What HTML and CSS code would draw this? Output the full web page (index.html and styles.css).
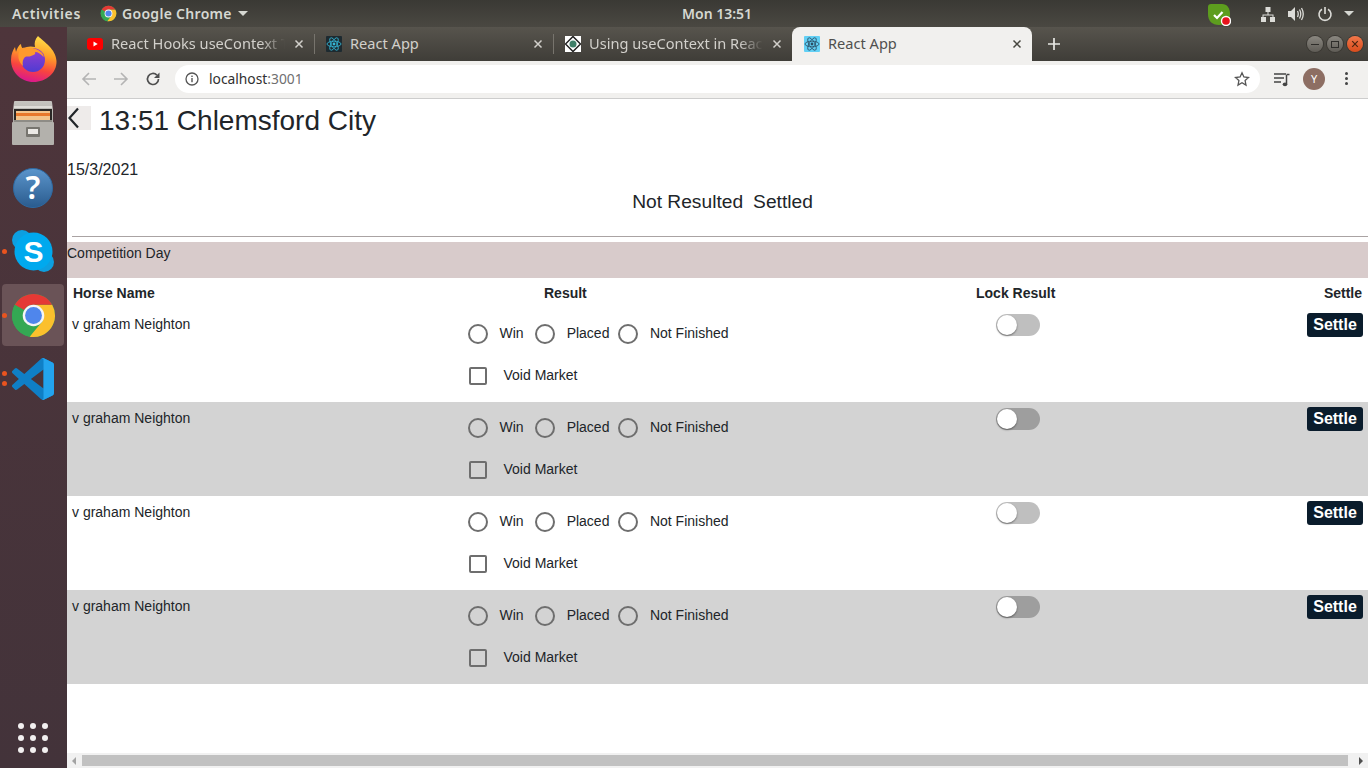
FILE: index.html
```html
<!DOCTYPE html>
<html lang="en">
<head>
<meta charset="utf-8">
<title>React App</title>
<link rel="stylesheet" href="styles.css">
</head>
<body>
<svg class="defs" width="0" height="0" aria-hidden="true">
  <defs>
    <symbol id="chrome" viewBox="0 0 48 48">
      <circle cx="24" cy="24" r="22" fill="#34a853"/>
      <path d="M43.05 13H24l9.5 16.5L20 45.6A22 22 0 0 0 43.05 13z" fill="#fbc02d"/>
      <path d="M4.95 13a22 22 0 0 1 38.1 0H24a11 11 0 0 0-9.5 5.5z" fill="#e53935"/>
      <path d="M4.95 13a22 22 0 0 0 15 32.6L29.5 29.5H14.5z" fill="#34a853"/>
      <circle cx="24" cy="24" r="11" fill="#f5f5f5"/>
      <circle cx="24" cy="24" r="8.6" fill="#4f86ec"/>
    </symbol>
    <symbol id="react" viewBox="0 0 16 16">
      <rect width="16" height="16" rx="1" fill="currentColor"/>
      <g fill="none" stroke="#35b8d8" stroke-width=".8">
        <ellipse cx="8" cy="8" rx="7" ry="2.8"/>
        <ellipse cx="8" cy="8" rx="7" ry="2.8" transform="rotate(60 8 8)"/>
        <ellipse cx="8" cy="8" rx="7" ry="2.8" transform="rotate(120 8 8)"/>
      </g>
      <circle cx="8" cy="8" r="1.4" fill="#35b8d8"/>
    </symbol>
    <symbol id="close" viewBox="0 0 10 10">
      <path d="M1.5 1.5l7 7M8.5 1.5l-7 7" fill="none" stroke="currentColor" stroke-width="1.5"/>
    </symbol>
  </defs>
</svg>

<header class="topbar">
  <div class="topbar-left">
    <span class="activities">Activities</span>
    <span class="app-menu">
      <svg class="app-menu-icon" width="17" height="17"><use href="#chrome"/></svg>
      Google Chrome
      <i class="caret"></i>
    </span>
  </div>
  <span class="clock">Mon 13:51</span>
  <div class="tray">
    <svg class="tray-shield" width="23" height="24" viewBox="0 0 23 24">
      <path d="M3 2H14C19 2 22 6 22 12C22 19 18 23 11 23C4 23 0 19 0 12V5C0 3 1 2 3 2Z" fill="#5d9d1e"/>
      <path d="M6 13l3 3 5.500-6" fill="none" stroke="#fff" stroke-width="2.200"/>
      <circle cx="18" cy="19" r="5.200" fill="#fff"/>
      <circle cx="18" cy="19" r="3.800" fill="#e8131c"/>
    </svg>
    <svg class="tray-net" width="16" height="16" viewBox="0 0 16 16" fill="#dcdcd8">
      <rect x="5.500" y="1" width="5" height="5"/>
      <rect x="1" y="11" width="5" height="5"/>
      <rect x="10" y="11" width="5" height="5"/>
      <path d="M7.500 6h1v2.500h5V11h-1V9.500h-9V11h-1V8.500h5z"/>
    </svg>
    <svg class="tray-vol" width="18" height="16" viewBox="0 0 18 16">
      <path d="M1 5h3l4-4v14l-4-4H1z" fill="#dcdcd8"/>
      <path d="M10.500 5q1.500 3 0 6M12.500 3.500q2.500 4.500 0 9M14.500 2q3.500 6 0 12" fill="none" stroke="#dcdcd8" stroke-width="1.300"/>
    </svg>
    <svg class="tray-power" width="16" height="16" viewBox="0 0 16 16">
      <path d="M5 3.200a6 6 0 1 0 6 0M8 1v7" fill="none" stroke="#dcdcd8" stroke-width="1.600"/>
    </svg>
    <i class="caret"></i>
  </div>
</header>

<div class="desk">
  <nav class="dock">
    <div class="dock-item">
      <svg width="48" height="48" viewBox="-1 0 48 48">
        <defs>
          <linearGradient id="ff" x1="0.650" y1="0" x2="0.400" y2="1">
            <stop offset="0" stop-color="#ffe04a"/><stop offset=".38" stop-color="#ffa028"/><stop offset=".7" stop-color="#f8443f"/><stop offset="1" stop-color="#d9178f"/>
          </linearGradient>
          <linearGradient id="ffball" x1="0.500" y1="0" x2="0.500" y2="1">
            <stop offset="0" stop-color="#9a3fd0"/><stop offset="1" stop-color="#4f3bd2"/>
          </linearGradient>
        </defs>
        <path d="M28 1C34 7 46 14 46.500 26C47 38 36 47 23.500 47C11 47 1 37 1 25C1 19 3 15 5 12L6 17C7 13 9 10 11 9C11 11 12 13 13 14C17 11 21 11 25 12C24 8 25 4 28 1Z" fill="url(#ff)"/>
        <circle cx="23" cy="25" r="12" fill="url(#ffball)"/>
        <path d="M10 14C14 12 22 12 28 15C32 17 34 20 33.500 22C31 19 28 17 25 17C26 19 24 20 21 21C19 22 17 21 15 22C13 24 12 27 13 31C8 27 7 19 10 14Z" fill="#ff9a2c"/>
      </svg>
    </div>
    <div class="dock-item">
      <svg width="44" height="44" viewBox="0 0 44 44">
        <defs>
          <linearGradient id="cab" x1="0" y1="0" x2="0" y2="1">
            <stop offset="0" stop-color="#c6c4c0"/><stop offset="1" stop-color="#98968f"/>
          </linearGradient>
        </defs>
        <path d="M3 1q0-1 1-1h36q1 0 1 1l1 8v34q0 1-1 1H3q-1 0-1-1V9z" fill="url(#cab)"/>
        <rect x="3" y="5" width="38" height="2" fill="#dedcd8"/>
        <rect x="3" y="8" width="38" height="13" fill="#2a2725"/>
        <rect x="5" y="10" width="34" height="9" fill="#f3c48c"/>
        <rect x="5" y="12" width="34" height="3" fill="#e8782c"/>
        <rect x="3" y="19" width="38" height="2" fill="#8e8c86"/>
        <rect x="1" y="21" width="42" height="23" rx="1" fill="#b3b1ac"/>
        <rect x="15" y="26" width="14" height="10" rx="1" fill="#77756f"/>
        <rect x="17" y="28" width="10" height="5" fill="#ebe9e5"/>
      </svg>
    </div>
    <div class="dock-item">
      <svg width="42" height="42" viewBox="0 0 42 42">
        <defs>
          <linearGradient id="hlp" x1="0" y1="0" x2="0" y2="1">
            <stop offset="0" stop-color="#5b95cc"/><stop offset="1" stop-color="#2a5b8e"/>
          </linearGradient>
        </defs>
        <circle cx="21" cy="22" r="19.500" fill="url(#hlp)" stroke="#2d6aa3"/>
        <text x="21" y="33" class="help-mark" text-anchor="middle">?</text>
      </svg>
    </div>
    <div class="dock-item has-dot">
      <svg width="44" height="44" viewBox="0 0 44 44">
        <circle cx="11" cy="11" r="10" fill="#0d9fe0"/>
        <circle cx="33" cy="33" r="10" fill="#0d9fe0"/>
        <circle cx="22.500" cy="22.500" r="19" fill="#00a9ee"/>
        <text x="22.500" y="33" class="skype-mark" text-anchor="middle">S</text>
      </svg>
    </div>
    <div class="dock-item is-active has-dot">
      <svg width="47" height="47"><use href="#chrome"/></svg>
    </div>
    <div class="dock-item has-two-dots">
      <svg width="42" height="42" viewBox="0 0 24 24">
        <path d="M23.150 2.587L18.210.21a1.494 1.494 0 0 0-1.705.29l-9.460 8.630-4.120-3.128a.999.999 0 0 0-1.276.057L.327 7.261A1 1 0 0 0 .326 8.740L3.899 12 .326 15.260a1 1 0 0 0 .001 1.479L1.650 17.940a.999.999 0 0 0 1.276.057l4.120-3.128 9.460 8.630a1.492 1.492 0 0 0 1.704.29l4.942-2.377A1.500 1.500 0 0 0 24 20.060V3.939a1.500 1.500 0 0 0-.85-1.352zm-5.146 14.861L10.826 12l7.178-5.448v10.896z" fill="#0f7fc6"/>
        <path d="M17 .1a1.500 1.500 0 0 1 1.210.11l4.940 2.377A1.500 1.500 0 0 1 24 3.939V20.060a1.500 1.500 0 0 1-.85 1.352l-4.940 2.377a1.500 1.500 0 0 1-1.210.11c.6.1 1-.4 1-1V1c0-.5-.4-1-1-.9z" fill="#23a4ee"/>
      </svg>
    </div>
    <div class="app-grid" aria-label="Show applications">
      <i></i><i></i><i></i><i></i><i></i><i></i><i></i><i></i><i></i>
    </div>
  </nav>

  <div class="browser">
    <div class="tabstrip">
      <div class="tab">
        <svg class="tab-icon" width="16" height="16" viewBox="0 0 16 16">
          <rect y="2" width="16" height="12" rx="3" fill="#f00"/>
          <path d="M6.500 5.500v5l4.200-2.500z" fill="#fff"/>
        </svg>
        <span class="tab-title is-faded">React Hooks useContext T</span>
        <svg class="tab-close" width="10" height="10"><use href="#close"/></svg>
      </div>
      <div class="tab">
        <svg class="tab-icon react-dark" width="16" height="16"><use href="#react"/></svg>
        <span class="tab-title">React App</span>
        <svg class="tab-close" width="10" height="10"><use href="#close"/></svg>
      </div>
      <div class="tab no-sep">
        <svg class="tab-icon" width="16" height="16" viewBox="0 0 16 16">
          <rect width="16" height="16" fill="#fff"/>
          <path d="M8 .5L15.500 8 8 15.500.5 8z" fill="none" stroke="#222" stroke-width="1.500"/>
          <circle cx="8" cy="8" r="3.500" fill="#3f7f68"/>
        </svg>
        <span class="tab-title is-faded">Using useContext in Reac</span>
        <svg class="tab-close" width="10" height="10"><use href="#close"/></svg>
      </div>
      <div class="tab is-active">
        <svg class="tab-icon react-light" width="16" height="16" viewBox="0 0 16 16">
          <rect width="16" height="16" rx="1" fill="#62d0f5"/>
          <g fill="none" stroke="#2b4c63" stroke-width=".8">
            <ellipse cx="8" cy="8" rx="7" ry="2.800"/>
            <ellipse cx="8" cy="8" rx="7" ry="2.800" transform="rotate(60 8 8)"/>
            <ellipse cx="8" cy="8" rx="7" ry="2.800" transform="rotate(120 8 8)"/>
          </g>
          <circle cx="8" cy="8" r="1.400" fill="#2b4c63"/>
        </svg>
        <span class="tab-title">React App</span>
        <svg class="tab-close" width="10" height="10"><use href="#close"/></svg>
      </div>
      <svg class="new-tab" width="12" height="12" viewBox="0 0 12 12">
        <path d="M6 0v12M0 6h12" stroke="#e8e8e4" stroke-width="1.700"/>
      </svg>
      <div class="win-controls">
        <span class="win-btn"><i class="win-min"></i></span>
        <span class="win-btn"><i class="win-max"></i></span>
        <span class="win-btn win-close">
          <svg width="8" height="8"><use href="#close"/></svg>
        </span>
      </div>
    </div>

    <div class="toolbar">
      <svg class="tool tool-first" width="16" height="16" viewBox="0 0 16 16">
        <path d="M15 8H2M8 2L2 8l6 6" fill="none" stroke="#b4b4b4" stroke-width="1.600"/>
      </svg>
      <svg class="tool" width="16" height="16" viewBox="0 0 16 16">
        <path d="M1 8h13M8 2l6 6-6 6" fill="none" stroke="#b4b4b4" stroke-width="1.600"/>
      </svg>
      <svg class="tool" width="16" height="16" viewBox="0 0 16 16">
        <path d="M13.500 8a5.500 5.500 0 1 1-1.600-3.900" fill="none" stroke="#4f4f4f" stroke-width="1.700"/>
        <path d="M14.500 1.500v5.500H9z" fill="#4f4f4f"/>
      </svg>
      <div class="omnibox">
        <svg class="info" width="14" height="14" viewBox="0 0 14 14">
          <circle cx="7" cy="7" r="6" fill="none" stroke="#555" stroke-width="1.300"/>
          <rect x="6.300" y="6" width="1.400" height="4.200" fill="#555"/>
          <rect x="6.300" y="3.600" width="1.400" height="1.400" fill="#555"/>
        </svg>
        <span class="url">localhost<span class="url-port">:3001</span></span>
        <svg class="star" width="16" height="16" viewBox="0 0 16 16">
          <path d="M8 1.800l1.900 4.200 4.600.5-3.400 3.100.9 4.500L8 11.800l-4 2.300.9-4.500L1.500 6.500 6.100 6z" fill="none" stroke="#555" stroke-width="1.300"/>
        </svg>
      </div>
      <svg class="queue" width="16" height="16" viewBox="0 0 16 16">
        <path d="M0 3h12M0 7h10M0 11h7" stroke="#444" stroke-width="1.500"/>
        <path d="M12.500 4v9" stroke="#444" stroke-width="1.500"/>
        <path d="M12.500 3.500h3" stroke="#444" stroke-width="1.500"/>
        <ellipse cx="11" cy="13.300" rx="2.300" ry="1.900" fill="#444"/>
      </svg>
      <span class="avatar">Y</span>
      <span class="kebab"><i></i><i></i><i></i></span>
    </div>

    <main class="page">
      <div class="page-head">
        <button class="back" type="button" aria-label="Back">
          <svg width="11" height="22" viewBox="0 0 11 22">
            <path d="M10 1.500L1.500 11l8.500 9.500" fill="none" stroke="#212529" stroke-width="2.200"/>
          </svg>
        </button>
        <h1 class="title">13:51 Chlemsford City</h1>
      </div>
      <p class="date">15/3/2021</p>
      <div class="filter">
        <span>Not Resulted</span>
        <span>Settled</span>
      </div>
      <hr class="rule">
      <div class="band">Competition Day</div>

      <div class="grid-row head-row">
        <span class="h-name">Horse Name</span>
        <span class="h-result">Result</span>
        <span>Lock Result</span>
        <span class="h-settle">Settle</span>
      </div>

      <div class="grid-row data-row">
        <div class="c-name">v graham Neighton</div>
        <div class="c-result">
          <div class="radios">
            <span class="opt"><i class="radio"></i><span class="lbl">Win</span></span>
            <span class="opt"><i class="radio"></i><span class="lbl">Placed</span></span>
            <span class="opt"><i class="radio"></i><span class="lbl">Not Finished</span></span>
          </div>
          <div class="void"><i class="check"></i><span class="lbl">Void Market</span></div>
        </div>
        <div class="c-lock"><span class="toggle"><i></i></span></div>
        <div class="c-settle"><button class="settle" type="button">Settle</button></div>
      </div>

      <div class="grid-row data-row is-alt">
        <div class="c-name">v graham Neighton</div>
        <div class="c-result">
          <div class="radios">
            <span class="opt"><i class="radio"></i><span class="lbl">Win</span></span>
            <span class="opt"><i class="radio"></i><span class="lbl">Placed</span></span>
            <span class="opt"><i class="radio"></i><span class="lbl">Not Finished</span></span>
          </div>
          <div class="void"><i class="check"></i><span class="lbl">Void Market</span></div>
        </div>
        <div class="c-lock"><span class="toggle"><i></i></span></div>
        <div class="c-settle"><button class="settle" type="button">Settle</button></div>
      </div>

      <div class="grid-row data-row">
        <div class="c-name">v graham Neighton</div>
        <div class="c-result">
          <div class="radios">
            <span class="opt"><i class="radio"></i><span class="lbl">Win</span></span>
            <span class="opt"><i class="radio"></i><span class="lbl">Placed</span></span>
            <span class="opt"><i class="radio"></i><span class="lbl">Not Finished</span></span>
          </div>
          <div class="void"><i class="check"></i><span class="lbl">Void Market</span></div>
        </div>
        <div class="c-lock"><span class="toggle"><i></i></span></div>
        <div class="c-settle"><button class="settle" type="button">Settle</button></div>
      </div>

      <div class="grid-row data-row is-alt">
        <div class="c-name">v graham Neighton</div>
        <div class="c-result">
          <div class="radios">
            <span class="opt"><i class="radio"></i><span class="lbl">Win</span></span>
            <span class="opt"><i class="radio"></i><span class="lbl">Placed</span></span>
            <span class="opt"><i class="radio"></i><span class="lbl">Not Finished</span></span>
          </div>
          <div class="void"><i class="check"></i><span class="lbl">Void Market</span></div>
        </div>
        <div class="c-lock"><span class="toggle"><i></i></span></div>
        <div class="c-settle"><button class="settle" type="button">Settle</button></div>
      </div>
    </main>

    <div class="hscroll">
      <i class="arrow-left"></i>
      <span class="thumb"></span>
      <i class="arrow-right"></i>
    </div>
  </div>
</div>
</body>
</html>
```

FILE: styles.css
```css
* { box-sizing: border-box; }
html, body { height: 100%; }
body {
  margin: 0;
  width: 1368px;
  height: 768px;
  overflow: hidden;
  display: flex;
  flex-direction: column;
  font-family: "Liberation Sans", Arial, sans-serif;
  color: #212529;
  background: #fff;
}
i { display: block; font-style: normal; }
.defs { display: block; flex: none; }

/* GNOME top bar */
.topbar {
  flex: none;
  height: 27px;
  display: flex;
  align-items: center;
  background: linear-gradient(#3a3934, #4a4842);
  color: #d6d8d2;
  font-family: "Noto Sans", sans-serif;
  font-size: 14px;
  font-weight: 600;
}
.topbar-left {
  width: 682px;
  display: flex;
  align-items: center;
  padding-left: 12px;
}
.activities { width: 88px; letter-spacing: .65px; }
.app-menu { display: flex; align-items: center; letter-spacing: .3px; }
.app-menu-icon { margin-right: 5px; }
.caret {
  width: 0;
  height: 0;
  border-left: 5px solid transparent;
  border-right: 5px solid transparent;
  border-top: 5px solid #d6d8d2;
}
.app-menu .caret { margin-left: 6px; }
.clock { width: 70px; white-space: nowrap; }
.tray {
  margin-left: auto;
  display: flex;
  align-items: center;
  padding-right: 14px;
}
.tray-shield { margin-right: 29px; }
.tray-net { margin-right: 11px; }
.tray-vol { margin-right: 12px; }
.tray-power { margin-right: 11px; }

/* Desktop */
.desk { flex: 1; min-height: 0; display: flex; }
.dock {
  flex: none;
  width: 67px;
  padding-left: 2px;
  display: flex;
  flex-direction: column;
  align-items: flex-start;
  background: linear-gradient(#4e353b, #43333a);
}
.dock-item {
  position: relative;
  width: 62px;
  height: 64px;
  display: flex;
  align-items: center;
  justify-content: center;
}
.dock-item.is-active {
  height: 62px;
  margin: 1px 0;
  border-radius: 4px;
  background: #6a5357;
}
.has-dot::before,
.has-two-dots::before,
.has-two-dots::after {
  content: "";
  position: absolute;
  left: 0;
  width: 5px;
  height: 5px;
  border-radius: 50%;
  background: #e9541f;
}
.has-dot::before { top: 50%; margin-top: -2px; }
.has-two-dots::before { top: 24px; }
.has-two-dots::after { top: 34px; }
.help-mark {
  font-family: "Noto Sans", sans-serif;
  font-weight: 600;
  font-size: 32px;
  fill: #fff;
}
.skype-mark {
  font-family: "Liberation Sans", sans-serif;
  font-weight: 700;
  font-size: 30px;
  fill: #fff;
}
.app-grid {
  margin-top: auto;
  margin-bottom: 15px;
  margin-left: 16px;
  display: grid;
  grid-template-columns: repeat(3, 6px);
  gap: 6px;
}
.app-grid i {
  width: 6px;
  height: 6px;
  border-radius: 50%;
  background: #f2f0f0;
}

/* Browser */
.browser { flex: 1; min-width: 0; display: flex; flex-direction: column; }
.tabstrip {
  flex: none;
  height: 34px;
  display: flex;
  align-items: stretch;
  padding-left: 8px;
  background: linear-gradient(#57544d, #3f3d38);
  font-family: "Noto Sans", sans-serif;
  font-size: 14.600px;
  color: #d2d0cb;
}
.tab {
  position: relative;
  flex: none;
  width: 239px;
  display: flex;
  align-items: center;
  padding: 0 10px 0 12px;
}
.tab::after {
  content: "";
  position: absolute;
  right: -1px;
  top: 7px;
  bottom: 7px;
  width: 1px;
  background: #77746d;
}
.tab.no-sep::after, .tab.is-active::after { display: none; }
.tab-icon { flex: none; margin-right: 8px; }
.react-dark { color: #1d2a30; }
.tab-title {
  flex: 1;
  min-width: 0;
  margin-bottom: 2px;
  white-space: nowrap;
}
.tab-title.is-faded {
  -webkit-mask-image: linear-gradient(to right, #000 150px, transparent 174px);
  mask-image: linear-gradient(to right, #000 150px, transparent 174px);
}
.tab-close { flex: none; margin-left: 8px; color: #d2d0cb; }
.tab.is-active {
  width: 240px;
  background: #f1f0ee;
  color: #50504e;
  border-radius: 8px 8px 0 0;
}
.tab.is-active .tab-close { color: #47473f; }
.new-tab { align-self: center; margin-left: 16px; }
.win-controls {
  margin-left: auto;
  display: flex;
  align-items: center;
  gap: 4px;
  padding-right: 5px;
}
.win-btn {
  width: 16px;
  height: 16px;
  border-radius: 50%;
  display: flex;
  align-items: center;
  justify-content: center;
  background: linear-gradient(#8a8780, #5f5c56);
  box-shadow: 0 0 0 1px #3a3833;
}
.win-min { width: 8px; height: 1px; background: #2e2d2a; }
.win-max { width: 8px; height: 7px; border: 1px solid #2e2d2a; }
.win-close { background: linear-gradient(#f2774a, #d84c1c); color: #4a2410; }

.toolbar {
  flex: none;
  height: 38px;
  display: flex;
  align-items: center;
  padding: 0 0 2px;
  background: #f1f0ee;
  border-bottom: 1px solid #cdcdcd;
}
.tool { flex: none; margin-right: 16px; }
.tool-first { margin-left: 14px; }
.omnibox {
  flex: none;
  width: 1085px;
  height: 28px;
  margin-left: -2px;
  display: flex;
  align-items: center;
  padding: 0 10px;
  border-radius: 14px;
  background: #fff;
}
.info { flex: none; margin-right: 10px; }
.url {
  font-family: "Noto Sans", sans-serif;
  font-size: 13.800px;
  color: #303030;
}
.url-port { color: #6f6f6f; }
.star { margin-left: auto; margin-right: 0; }
.queue { flex: none; margin-left: 14px; }
.avatar {
  flex: none;
  width: 22px;
  height: 22px;
  margin-left: 13px;
  border-radius: 50%;
  background: #8d6e63;
  color: #fff;
  font-family: "Noto Sans", sans-serif;
  font-size: 11px;
  line-height: 22px;
  text-align: center;
}
.kebab {
  margin-left: 20px;
  display: grid;
  gap: 2px;
}
.kebab i { width: 3px; height: 3px; border-radius: 50%; background: #444; }

/* Page */
.page {
  flex: 1;
  min-height: 0;
  overflow: hidden;
  background: #fff;
}
.page-head {
  display: flex;
  align-items: flex-start;
  gap: 8px;
  padding-top: 7px;
}
.back {
  flex: none;
  width: 24px;
  height: 24px;
  padding: 0 0 0 1px;
  border: 0;
  display: flex;
  align-items: center;
  background: #eeebea;
}
.title {
  margin: 1px 0 0;
  font-size: 28px;
  font-weight: 400;
  line-height: 28px;
}
.date {
  margin: 26px 0 0;
  font-size: 16px;
  line-height: 18px;
}
.filter {
  margin: 12px 0 0 10px;
  display: flex;
  justify-content: center;
  gap: 10px;
  font-size: 19.200px;
  line-height: 22px;
}
.rule {
  margin: 23px 0 0 5px;
  border: 0;
  border-top: 1px solid #aaa3a3;
}
.band {
  margin-top: 5px;
  height: 36px;
  padding-top: 3px;
  background: #d8cbcb;
  font-size: 14px;
  line-height: 16px;
}
.grid-row {
  display: grid;
  grid-template-columns: 395px 514px 1fr auto;
  font-size: 14px;
}
.head-row {
  height: 30px;
  align-items: center;
  font-weight: 700;
}
.h-name { padding-left: 6px; }
.h-result { padding-left: 82px; }
.h-settle { padding-right: 6px; }
.data-row { height: 94px; }
.is-alt { background: #d3d3d3; }
.c-name { padding: 8px 0 0 5px; line-height: 16px; }
.c-result { padding: 16px 0 0 6px; }
.radios { display: flex; height: 20px; align-items: center; }
.opt { display: flex; align-items: center; gap: 11.500px; margin-right: 11.500px; }
.opt:nth-child(2) { margin-right: 9px; }
.lbl { margin-bottom: 2px; }
.radio {
  width: 20px;
  height: 20px;
  border: 2px solid #6e6e6e;
  border-radius: 50%;
}
.void {
  margin-top: 23px;
  padding-left: 1px;
  display: flex;
  align-items: center;
  gap: 16.500px;
}
.check {
  width: 18px;
  height: 18px;
  border: 2px solid #6e6e6e;
  border-radius: 2px;
}
.c-lock { padding: 6px 0 0 20px; }
.toggle {
  width: 44px;
  height: 22px;
  padding: 1px;
  display: block;
  border-radius: 11px;
  background: rgba(0, 0, 0, .25);
}
.toggle i {
  width: 20px;
  height: 20px;
  border-radius: 50%;
  background: #fff;
  box-shadow: 0 1px 2px rgba(0, 0, 0, .45);
}
.c-settle { padding: 5px 5px 0 0; }
.settle {
  display: block;
  width: 56px;
  height: 24px;
  padding: 0;
  border: 0;
  border-radius: 3px;
  background: #0a1c2c;
  color: #fff;
  font-family: "Liberation Sans", Arial, sans-serif;
  font-size: 16px;
  font-weight: 700;
  line-height: 22px;
}

/* Horizontal scrollbar */
.hscroll {
  flex: none;
  height: 15px;
  display: flex;
  align-items: center;
  background: #f1f1f1;
}
.thumb { width: 1266px; height: 11px; background: #c1c1c1; margin: 0 11px 0 6px; }
.arrow-left, .arrow-right {
  width: 0;
  height: 0;
  border-top: 4px solid transparent;
  border-bottom: 4px solid transparent;
}
.arrow-left { margin-left: 5px; border-right: 4px solid #a3a3a3; }
.arrow-right { border-left: 4px solid #505050; }
```
